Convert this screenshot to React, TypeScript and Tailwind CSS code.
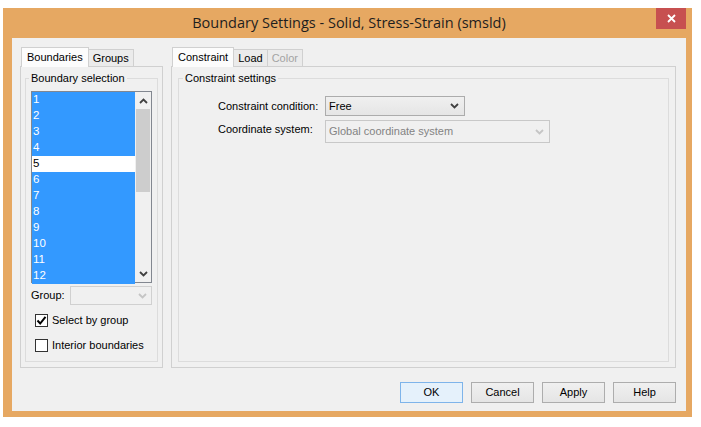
import React from "react";

const font = { fontFamily: '"Liberation Sans", Arial, sans-serif' };

function Chevron({ up = false, color = "#404040" }: { up?: boolean; color?: string }) {
  return (
    <svg width="9" height="6" viewBox="0 0 9 6" className="block">
      <path
        d={up ? "M1 5 L4.5 1.5 L8 5" : "M1 1 L4.5 4.5 L8 1"}
        fill="none"
        stroke={color}
        strokeWidth="1.8"
      />
    </svg>
  );
}

function Checkbox({ checked, label }: { checked?: boolean; label: string }) {
  return (
    <div className="flex items-center gap-[4px]">
      <div className="flex h-[13px] w-[13px] items-center justify-center border border-[#333] bg-white">
        {checked && (
          <svg width="11" height="11" viewBox="0 0 11 11">
            <path d="M1.5 5.5 L4.2 8.5 L9.5 1.8" fill="none" stroke="#000" strokeWidth="2" />
          </svg>
        )}
      </div>
      <span className="whitespace-nowrap text-[11px] leading-none text-black">{label}</span>
    </div>
  );
}

function Tab({ label, active, disabled }: { label: string; active?: boolean; disabled?: boolean }) {
  return active ? (
    <div className="relative z-10 -mb-px flex h-[20px] items-center whitespace-nowrap border border-b-0 border-[#d0d0d0] bg-[#fcfcfc] px-[5px] text-[11px] text-black">
      {label}
    </div>
  ) : (
    <div
      className={`-ml-px flex h-[17px] items-center whitespace-nowrap border border-b-0 border-[#d0d0d0] bg-[#ebebeb] px-[4px] text-[11px] ${
        disabled ? "text-[#a3a3a3]" : "text-black"
      }`}
    >
      {label}
    </div>
  );
}

function Button({ label, primary }: { label: string; primary?: boolean }) {
  return (
    <div
      className={`flex h-[21px] w-[63px] items-center justify-center border text-[11px] text-black ${
        primary
          ? "border-[#7eb4ea] bg-[#e5f1fb]"
          : "border-[#adadad] bg-gradient-to-b from-[#f0f0f0] to-[#e5e5e5]"
      }`}
    >
      {label}
    </div>
  );
}

const items = ["1", "2", "3", "4", "5", "6", "7", "8", "9", "10", "11", "12"];

export default function App() {
  return (
    <div className="h-[427px] w-[701px] bg-white pl-[3px] pt-[8px]" style={font}>
      <div className="flex h-[409px] w-[689px] flex-col bg-[#e6a862]">
        {/* title bar */}
        <div className="flex h-[30px] items-start pl-[9px] pr-[6px]">
          <div
            className="flex h-[30px] flex-1 items-center justify-center pl-[30px] text-[14.5px] text-[#1e1e1e]"
            style={{ fontFamily: '"Open Sans", "Noto Sans", sans-serif' }}
          >
            Boundary Settings - Solid, Stress-Strain (smsld)
          </div>
          <div className="flex h-[21px] w-[30px] items-center justify-center bg-[#c75050]">
            <svg width="9" height="9" viewBox="0 0 9 9">
              <path d="M1 1 L8 8 M8 1 L1 8" stroke="#fff" strokeWidth="1.8" />
            </svg>
          </div>
        </div>

        {/* client */}
        <div className="mb-[6px] ml-[9px] mr-[6px] flex flex-1 flex-col bg-[#f0f0f0] pl-[8px] pr-[10px] pt-[9px]">
          <div className="flex h-[321px] gap-[8px]">
            {/* left panel */}
            <div className="flex w-[143px] flex-col">
              <div className="flex items-end pl-[1px]">
                <Tab label="Boundaries" active />
                <Tab label="Groups" />
              </div>
              <div className="flex flex-1 flex-col border border-[#d0d0d0] px-[4px] pb-[5px] pt-[11px]">
                <div className="relative flex flex-1 flex-col border border-[#dcdcdc] px-[5px] pt-[12px]">
                  <span className="absolute -top-[8px] left-[3px] whitespace-nowrap bg-[#f0f0f0] px-[2px] text-[11px] leading-[15px] text-black">
                    Boundary selection
                  </span>
                  <div className="flex h-[192px] border border-[#828790] bg-white">
                    <div className="flex flex-1 flex-col">
                      {items.map((it) => (
                        <div
                          key={it}
                          className={`flex h-[16px] items-center pl-[1px] text-[11.5px] ${
                            it === "5" ? "bg-white text-black" : "bg-[#3399ff] text-white"
                          }`}
                        >
                          {it}
                        </div>
                      ))}
                    </div>
                    <div className="flex w-[16px] flex-col bg-[#f0f0f0]">
                      <div className="flex h-[17px] items-center justify-center">
                        <Chevron up />
                      </div>
                      <div className="mx-[1px] h-[83px] bg-[#cdcdcd]" />
                      <div className="flex-1" />
                      <div className="flex h-[17px] items-center justify-center">
                        <Chevron />
                      </div>
                    </div>
                  </div>
                  <div className="mt-[3px] flex items-center justify-between">
                    <span className="text-[11px] text-black">Group:</span>
                    <div className="flex h-[19px] w-[82px] items-center justify-end border border-[#d0d0d0] bg-[#f0f0f0] pr-[4px]">
                      <Chevron color="#c5c5c5" />
                    </div>
                  </div>
                  <div className="ml-[4px] mt-[9px] flex flex-col gap-[12px]">
                    <Checkbox checked label="Select by group" />
                    <Checkbox label="Interior boundaries" />
                  </div>
                </div>
              </div>
            </div>

            {/* right panel */}
            <div className="flex flex-1 flex-col">
              <div className="flex items-end pl-[1px]">
                <Tab label="Constraint" active />
                <Tab label="Load" />
                <Tab label="Color" disabled />
              </div>
              <div className="flex flex-1 flex-col border border-[#d0d0d0] px-[6px] pb-[5px] pt-[11px]">
                <div className="relative flex flex-1 flex-col border border-[#dcdcdc] pl-[39px] pt-[17px]">
                  <span className="absolute -top-[8px] left-[4px] whitespace-nowrap bg-[#f0f0f0] px-[2px] text-[11px] leading-[15px] text-black">
                    Constraint settings
                  </span>
                  <div className="grid grid-cols-[107px_auto] items-center justify-start gap-y-[4px]">
                    <span className="whitespace-nowrap text-[11px] text-black">Constraint condition:</span>
                    <div className="flex h-[20px] w-[140px] items-center justify-between border border-[#acacac] bg-gradient-to-b from-[#f0f0f0] to-[#e5e5e5] pl-[3px] pr-[5px] text-[11px] text-black">
                      Free
                      <Chevron />
                    </div>
                    <span className="self-start whitespace-nowrap pt-[1px] text-[11px] text-black">Coordinate system:</span>
                    <div className="flex h-[23px] w-[225px] items-center justify-between border border-[#c8c8c8] bg-[#f0f0f0] pl-[3px] pr-[5px] text-[11px] text-[#838383]">
                      Global coordinate system
                      <Chevron color="#c5c5c5" />
                    </div>
                  </div>
                </div>
              </div>
            </div>
          </div>

          {/* buttons */}
          <div className="mt-[14px] flex justify-end gap-[8px]">
            <Button label="OK" primary />
            <Button label="Cancel" />
            <Button label="Apply" />
            <Button label="Help" />
          </div>
        </div>
      </div>
    </div>
  );
}
